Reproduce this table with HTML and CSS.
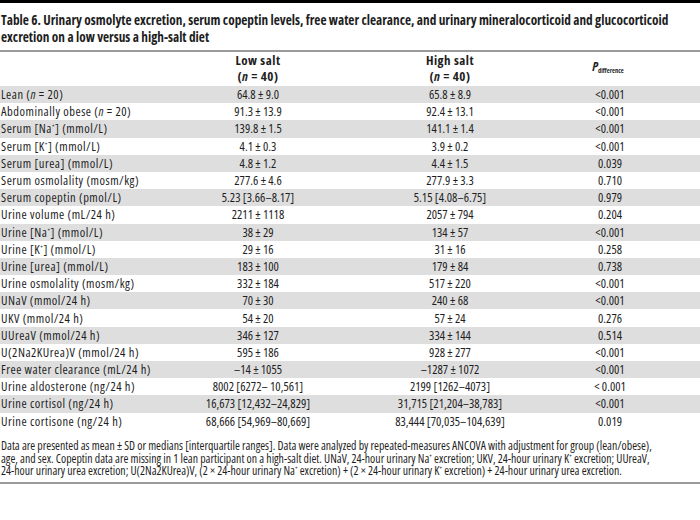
FILE: index.html
```html
<!DOCTYPE html>
<html>
<head>
<meta charset="utf-8">
<link rel="stylesheet" href="styles.css">
</head>
<body>
<div class="page">
  <div class="topbar"></div>
  <h1 class="title">Table 6. Urinary osmolyte excretion, serum copeptin levels, free water clearance, and urinary mineralocorticoid and glucocorticoid<br>excretion on a low versus a high-salt diet</h1>
  <div class="table">
    <div class="row head">
      <div class="c1"></div>
      <div class="c">Low salt<br>(<i>n</i> = 40)</div>
      <div class="c">High salt<br>(<i>n</i> = 40)</div>
      <div class="c p"><i>P</i><sub>difference</sub></div>
    </div>
    <div class="row"><div class="c1">Lean (<i>n</i> = 20)</div><div class="c">64.8 ± 9.0</div><div class="c">65.8 ± 8.9</div><div class="c">&lt;0.001</div></div>
    <div class="row"><div class="c1">Abdominally obese (<i>n</i> = 20)</div><div class="c">91.3 ± 13.9</div><div class="c">92.4 ± 13.1</div><div class="c">&lt;0.001</div></div>
    <div class="row"><div class="c1">Serum [Na<sup>+</sup>] (mmol/L)</div><div class="c">139.8 ± 1.5</div><div class="c">141.1 ± 1.4</div><div class="c">&lt;0.001</div></div>
    <div class="row"><div class="c1">Serum [K<sup>+</sup>] (mmol/L)</div><div class="c">4.1 ± 0.3</div><div class="c">3.9 ± 0.2</div><div class="c">&lt;0.001</div></div>
    <div class="row"><div class="c1">Serum [urea] (mmol/L)</div><div class="c">4.8 ± 1.2</div><div class="c">4.4 ± 1.5</div><div class="c">0.039</div></div>
    <div class="row"><div class="c1">Serum osmolality (mosm/kg)</div><div class="c">277.6 ± 4.6</div><div class="c">277.9 ± 3.3</div><div class="c">0.710</div></div>
    <div class="row"><div class="c1">Serum copeptin (pmol/L)</div><div class="c">5.23 [3.66–8.17]</div><div class="c">5.15 [4.08–6.75]</div><div class="c">0.979</div></div>
    <div class="row"><div class="c1">Urine volume (mL/24 h)</div><div class="c">2211 ± 1118</div><div class="c">2057 ± 794</div><div class="c">0.204</div></div>
    <div class="row"><div class="c1">Urine [Na<sup>+</sup>] (mmol/L)</div><div class="c">38 ± 29</div><div class="c">134 ± 57</div><div class="c">&lt;0.001</div></div>
    <div class="row"><div class="c1">Urine [K<sup>+</sup>] (mmol/L)</div><div class="c">29 ± 16</div><div class="c">31 ± 16</div><div class="c">0.258</div></div>
    <div class="row"><div class="c1">Urine [urea] (mmol/L)</div><div class="c">183 ± 100</div><div class="c">179 ± 84</div><div class="c">0.738</div></div>
    <div class="row"><div class="c1">Urine osmolality (mosm/kg)</div><div class="c">332 ± 184</div><div class="c">517 ± 220</div><div class="c">&lt;0.001</div></div>
    <div class="row"><div class="c1">UNaV (mmol/24 h)</div><div class="c">70 ± 30</div><div class="c">240 ± 68</div><div class="c">&lt;0.001</div></div>
    <div class="row"><div class="c1">UKV (mmol/24 h)</div><div class="c">54 ± 20</div><div class="c">57 ± 24</div><div class="c">0.276</div></div>
    <div class="row"><div class="c1">UUreaV (mmol/24 h)</div><div class="c">346 ± 127</div><div class="c">334 ± 144</div><div class="c">0.514</div></div>
    <div class="row"><div class="c1">U(2Na2KUrea)V (mmol/24 h)</div><div class="c">595 ± 186</div><div class="c">928 ± 277</div><div class="c">&lt;0.001</div></div>
    <div class="row"><div class="c1">Free water clearance (mL/24 h)</div><div class="c">–14 ± 1055</div><div class="c">–1287 ± 1072</div><div class="c">&lt;0.001</div></div>
    <div class="row"><div class="c1">Urine aldosterone (ng/24 h)</div><div class="c">8002 [6272– 10,561]</div><div class="c">2199 [1262–4073]</div><div class="c">&lt; 0.001</div></div>
    <div class="row"><div class="c1">Urine cortisol (ng/24 h)</div><div class="c">16,673 [12,432–24,829]</div><div class="c">31,715 [21,204–38,783]</div><div class="c">&lt;0.001</div></div>
    <div class="row"><div class="c1">Urine cortisone (ng/24 h)</div><div class="c">68,666 [54,969–80,669]</div><div class="c">83,444 [70,035–104,639]</div><div class="c">0.019</div></div>
  </div>
  <p class="note">Data are presented as mean ± SD or medians [interquartile ranges]. Data were analyzed by repeated-measures ANCOVA with adjustment for group (lean/obese),<br>age, and sex. Copeptin data are missing in 1 lean participant on a high-salt diet. UNaV, 24-hour urinary Na<sup>+</sup> excretion; UKV, 24-hour urinary K<sup>+</sup> excretion; UUreaV,<br>24-hour urinary urea excretion; U(2Na2KUrea)V, (2 × 24-hour urinary Na<sup>+</sup> excretion) + (2 × 24-hour urinary K<sup>+</sup> excretion) + 24-hour urinary urea excretion.</p>
</div>
</body>
</html>
```
FILE: styles.css
```css
html, body {
  margin: 0;
  padding: 0;
  background: #fff;
}
.page {
  width: 700px;
  font-family: "Open Sans", "Noto Sans", "DejaVu Sans Condensed", sans-serif;
  font-stretch: 75%;
  color: #1e1e1e;
}
.topbar {
  height: 3px;
  background: #000;
}
.title {
  margin: 0;
  padding: 9px 0 4px 1px;
  font-size: 13.3px;
  line-height: 17px;
  font-weight: bold;
  white-space: nowrap;
  border-bottom: 2px solid #9a9a9a;
}
.table {
  display: flex;
  flex-direction: column;
}
.row {
  display: grid;
  grid-template-columns: 160px 196px 188px 132px 1fr;
  height: 17.2px;
  align-items: center;
  font-size: 12.5px;
  line-height: 17px;
}
.row:nth-child(even) {
  background: #dedede;
}
.row.head {
  height: 34px;
  align-items: start;
  font-weight: bold;
  font-size: 13px;
  letter-spacing: 0.5px;
  line-height: 16px;
}
.c1 {
  padding-left: 1px;
  letter-spacing: 0.5px;
  white-space: nowrap;
}
.c {
  text-align: center;
  white-space: nowrap;
}
.p {
  padding-top: 6px;
  padding-right: 4px;
  letter-spacing: 0;
}
.p sub {
  font-size: 6.5px;
  vertical-align: -2px;
}
sup {
  font-size: 6px;
  vertical-align: 5px;
  line-height: 0;
}
.note {
  margin: 0;
  padding: 9px 0 5px 1px;
  font-size: 11.8px;
  line-height: 12.8px;
  white-space: nowrap;
  border-bottom: 2px solid #9a9a9a;
}
```
